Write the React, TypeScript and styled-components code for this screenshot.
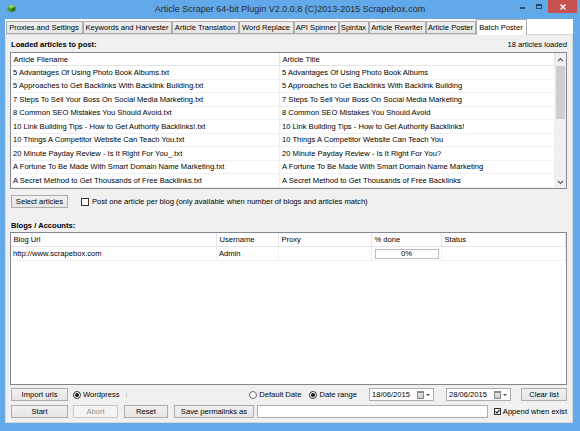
import React from 'react';
import styled, { createGlobalStyle } from 'styled-components';

const GlobalStyle = createGlobalStyle`
  * { box-sizing: border-box; }
  html, body { margin: 0; padding: 0; background: #62a9e9; }
  body {
    font-family: 'Liberation Sans', Arial, sans-serif;
    font-size: 7.6px;
    color: #000;
  }
`;

const Window = styled.div`
  width: 580px;
  height: 431px;
  background: #62a9e9;
  display: flex;
  flex-direction: column;
  overflow: hidden;
`;

const TitleBar = styled.div`
  height: 19px;
  flex: none;
  display: grid;
  grid-template-columns: 1fr auto 1fr;
  align-items: start;
`;

const AppIcon = styled.svg`
  display: block;
  margin: 4px 0 0 7px;
`;

const Title = styled.div`
  font-size: 9px;
  line-height: 19px;
  color: #2b2b2b;
  white-space: nowrap;
`;

const Controls = styled.div`
  justify-self: end;
  display: flex;
  margin-right: 3px;
`;

const CtlBtn = styled.div<{ $w: number }>`
  width: ${p => p.$w}px;
  height: 13px;
  display: flex;
  align-items: center;
  justify-content: center;
`;

const MinGlyph = styled.span`
  width: 5px;
  height: 2px;
  background: #2c4a68;
  margin-top: 2px;
`;

const MaxGlyph = styled.span`
  width: 6px;
  height: 5px;
  border: 1px solid #2c4a68;
  border-top-width: 2px;
  margin-top: -1px;
`;

const CloseBtn = styled.div`
  width: 29px;
  height: 13px;
  margin-left: 3px;
  background: #c75050;
  display: flex;
  align-items: center;
  justify-content: center;
`;

const Client = styled.div`
  flex: 1;
  margin: 0 7px 8px 5px;
  display: flex;
  flex-direction: column;
  background: #fff;
  min-height: 0;
`;

const TabStrip = styled.div`
  height: 15px;
  flex: none;
  display: flex;
  align-items: flex-end;
  padding-left: 0.5px;
  background: #fff;
  position: relative;
  z-index: 1;
`;

const Tab = styled.div<{ $active?: boolean; $w: number }>`
  width: ${p => p.$w}px;
  flex: none;
  height: ${p => (p.$active ? 16 : 13)}px;
  margin-bottom: ${p => (p.$active ? -1 : 0)}px;
  border: 1px solid #acacac;
  border-bottom: ${p => (p.$active ? 'none' : '1px solid #acacac')};
  background: ${p => (p.$active ? '#ffffff' : 'linear-gradient(#f0f0f0, #e5e5e5)')};
  display: flex;
  align-items: center;
  justify-content: center;
  white-space: nowrap;
`;

const TabPage = styled.div`
  flex: 1;
  min-height: 0;
  background: #f0f0f0;
  border: 1px solid #d9d9d9;
  padding: 3px 5px 4px 4px;
  display: flex;
  flex-direction: column;
`;

const SectionRow = styled.div<{ $mt?: number }>`
  height: 12px;
  flex: none;
  margin-top: ${p => p.$mt ?? 0}px;
  display: flex;
  align-items: center;
  justify-content: space-between;
  padding-left: 1px;
`;

const Bold = styled.span`
  font-weight: bold;
`;

const ListBox = styled.div<{ $h?: number; $mt: number }>`
  ${p => (p.$h ? `height: ${p.$h}px; flex: none;` : 'flex: 1; min-height: 0;')}
  margin-top: ${p => p.$mt}px;
  border: 1px solid #828790;
  background: #fff;
  display: flex;
  overflow: hidden;
`;

const ListMain = styled.div`
  flex: 1;
  min-width: 0;
  display: flex;
  flex-direction: column;
`;

const HeaderRow = styled.div<{ $h: number }>`
  height: ${p => p.$h}px;
  flex: none;
  display: flex;
  border-bottom: 1px solid #e5e5e5;
`;

const HeaderCell = styled.div<{ $w?: number }>`
  ${p => (p.$w ? `width: ${p.$w}px; flex: none;` : 'flex: 1;')}
  border-right: 1px solid #e5e5e5;
  padding-left: 2.5px;
  display: flex;
  align-items: center;
  white-space: nowrap;
  overflow: hidden;
`;

const Row = styled.div<{ $h: number }>`
  height: ${p => p.$h}px;
  flex: none;
  display: flex;
  border-bottom: 1px solid #f0f0f0;
`;

const Cell = styled.div<{ $w?: number; $center?: boolean }>`
  ${p => (p.$w ? `width: ${p.$w}px; flex: none;` : 'flex: 1;')}
  border-right: 1px solid #f0f0f0;
  padding-left: ${p => (p.$center ? 0 : 2)}px;
  display: flex;
  align-items: center;
  justify-content: ${p => (p.$center ? 'center' : 'flex-start')};
  white-space: nowrap;
  overflow: hidden;
`;

const ScrollBar = styled.div`
  width: 11px;
  flex: none;
  background: #f0f0f0;
  display: flex;
  flex-direction: column;
`;

const ScrollArrow = styled.div<{ $h: number }>`
  height: ${p => p.$h}px;
  flex: none;
  display: flex;
  align-items: center;
  justify-content: center;
  background: #f0f0f0;
`;

const ScrollTrack = styled.div`
  flex: 1;
  display: flex;
  flex-direction: column;
  padding: 0 1px;
`;

const ScrollThumb = styled.div`
  height: 53px;
  background: #cdcdcd;
`;

const ToolRow = styled.div<{ $mt: number }>`
  height: 13px;
  flex: none;
  margin-top: ${p => p.$mt}px;
  display: flex;
  align-items: center;
  padding-left: 1px;
`;

const Button = styled.button<{ $w: number; $ml?: number }>`
  width: ${p => p.$w}px;
  height: 13px;
  flex: none;
  margin: 0 0 0 ${p => p.$ml ?? 0}px;
  padding: 0;
  font-family: inherit;
  font-size: 7.6px;
  line-height: 11px;
  color: ${p => (p.disabled ? '#8f8f8f' : '#000')};
  border: 1px solid ${p => (p.disabled ? '#c8c8c8' : '#acacac')};
  background: ${p => (p.disabled ? '#f4f4f4' : 'linear-gradient(#f0f0f0, #e5e5e5)')};
  border-radius: 0;
`;

const Option = styled.label<{ $ml?: number }>`
  display: flex;
  align-items: center;
  gap: 2px;
  margin-left: ${p => p.$ml ?? 0}px;
  white-space: nowrap;
  flex: none;
`;

const CheckBox = styled.span<{ $size: number }>`
  width: ${p => p.$size}px;
  height: ${p => p.$size}px;
  border: 1px solid #333;
  background: #fff;
  flex: none;
  display: flex;
  align-items: center;
  justify-content: center;
`;

const Radio = styled.span<{ $on?: boolean }>`
  width: 8px;
  height: 8px;
  border-radius: 50%;
  border: 1px solid ${p => (p.$on ? '#333' : '#6a6a6a')};
  background: #fff;
  flex: none;
  display: flex;
  align-items: center;
  justify-content: center;
  &::after {
    content: '';
    width: 4px;
    height: 4px;
    border-radius: 50%;
    background: #1a1a1a;
    display: ${p => (p.$on ? 'block' : 'none')};
  }
`;

const Tick = styled.span`
  width: 1px;
  height: 4px;
  background: #cfcfcf;
  margin-left: 6px;
`;

const Spacer = styled.div`
  flex: 1;
`;

const DateBox = styled.div<{ $ml: number }>`
  width: ${p => (p.$ml > 11 ? 65 : 64)}px;
  height: 13px;
  flex: none;
  margin-left: ${p => p.$ml}px;
  border: 1px solid #abadb3;
  background: #fff;
  display: flex;
  align-items: center;
  padding-left: 2px;
`;

const DateText = styled.span`
  flex: 1;
`;

const CalIcon = styled.span`
  width: 7px;
  height: 8px;
  border: 1px solid #8a8a8a;
  border-top-width: 2px;
  background: linear-gradient(#e8e8e8, #c8c8c8);
  flex: none;
`;

const DropArrow = styled.span`
  width: 0;
  height: 0;
  border-left: 2px solid transparent;
  border-right: 2px solid transparent;
  border-top: 2px solid #444;
  margin: 0 3px 0 2px;
  flex: none;
`;

const TextBox = styled.div`
  flex: 1;
  height: 13px;
  margin-left: 3px;
  border: 1px solid #abadb3;
  background: #fff;
`;

const Progress = styled.div`
  width: 64px;
  height: 10px;
  border: 1px solid #bcbcbc;
  background: #fff;
  display: flex;
  align-items: center;
  justify-content: center;
  font-size: 7.6px;
`;

const articles: [string, string][] = [
  ['5 Advantages Of Using Photo Book Albums.txt', '5 Advantages Of Using Photo Book Albums'],
  ['5 Approaches to Get Backlinks With Backlink Building.txt', '5 Approaches to Get Backlinks With Backlink Building'],
  ['7 Steps To Sell Your Boss On Social Media Marketing.txt', '7 Steps To Sell Your Boss On Social Media Marketing'],
  ['8 Common SEO Mistakes You Should Avoid.txt', '8 Common SEO Mistakes You Should Avoid'],
  ['10 Link Building Tips - How to Get Authority Backlinks!.txt', '10 Link Building Tips - How to Get Authority Backlinks!'],
  ['10 Things A Competitor Website Can Teach You.txt', '10 Things A Competitor Website Can Teach You'],
  ['20 Minute Payday Review - Is It Right For You_.txt', '20 Minute Payday Review - Is It Right For You?'],
  ['A Fortune To Be Made With Smart Domain Name Marketing.txt', 'A Fortune To Be Made With Smart Domain Name Marketing'],
  ['A Secret Method to Get Thousands of Free Backlinks.txt', 'A Secret Method to Get Thousands of Free Backlinks'],
];

const tabs: [string, number][] = [
  ['Proxies and Settings', 77],
  ['Keywords and Harvester', 89],
  ['Article Translation', 67],
  ['Word Replace', 55],
  ['API Spinner', 45],
  ['Spintax', 30],
  ['Article Rewriter', 57],
  ['Article Poster', 50],
  ['Batch Poster', 51],
];

const Chevron = ({ up }: { up?: boolean }) => (
  <svg width="7" height="5" viewBox="0 0 7 5">
    <path
      d={up ? 'M1 4 L3.5 1.5 L6 4' : 'M1 1 L3.5 3.5 L6 1'}
      fill="none"
      stroke="#606060"
      strokeWidth="1.2"
    />
  </svg>
);

export default function App() {
  return (
    <>
      <GlobalStyle />
      <Window>
        <TitleBar>
          <AppIcon width="9" height="9" viewBox="0 0 9 9">
            <path d="M4.5 0.5 L8.5 2.5 L4.5 4.5 L0.5 2.5 Z" fill="#8fcf5a" />
            <path d="M0.5 2.5 L4.5 4.5 L4.5 8.5 L0.5 6.5 Z" fill="#4f9a2c" />
            <path d="M8.5 2.5 L4.5 4.5 L4.5 8.5 L8.5 6.5 Z" fill="#2f6d1c" />
          </AppIcon>
          <Title>Article Scraper 64-bit Plugin V2.0.0.8 (C)2013-2015 Scrapebox.com</Title>
          <Controls>
            <CtlBtn $w={22}>
              <MinGlyph />
            </CtlBtn>
            <CtlBtn $w={12}>
              <MaxGlyph />
            </CtlBtn>
            <CloseBtn>
              <svg width="6" height="6" viewBox="0 0 6 6">
                <path d="M0.5 0.5 L5.5 5.5 M5.5 0.5 L0.5 5.5" stroke="#fff" strokeWidth="1.4" />
              </svg>
            </CloseBtn>
          </Controls>
        </TitleBar>

        <Client>
          <TabStrip>
            {tabs.map(([t, w]) => (
              <Tab key={t} $w={w} $active={t === 'Batch Poster'}>
                {t}
              </Tab>
            ))}
          </TabStrip>

          <TabPage>
            <SectionRow>
              <Bold>Loaded articles to post:</Bold>
              <span>18 articles loaded</span>
            </SectionRow>

            <ListBox $h={137} $mt={2}>
              <ListMain>
                <HeaderRow $h={13}>
                  <HeaderCell $w={269}>Article Filename</HeaderCell>
                  <HeaderCell>Article Title</HeaderCell>
                </HeaderRow>
                {articles.map(([f, t]) => (
                  <Row key={f} $h={13.5}>
                    <Cell $w={269}>{f}</Cell>
                    <Cell>{t}</Cell>
                  </Row>
                ))}
              </ListMain>
              <ScrollBar>
                <ScrollArrow $h={13}>
                  <Chevron up />
                </ScrollArrow>
                <ScrollTrack>
                  <ScrollThumb />
                </ScrollTrack>
                <ScrollArrow $h={12}>
                  <Chevron />
                </ScrollArrow>
              </ScrollBar>
            </ListBox>

            <ToolRow $mt={6}>
              <Button $w={57}>Select articles</Button>
              <Option $ml={13}>
                <CheckBox $size={8} />
                <span style={{ marginLeft: 1 }}>
                  Post one article per blog (only available when number of blogs and articles match)
                </span>
              </Option>
            </ToolRow>

            <SectionRow $mt={11}>
              <Bold>Blogs / Accounts:</Bold>
            </SectionRow>

            <ListBox $mt={1}>
              <ListMain>
                <HeaderRow $h={14}>
                  <HeaderCell $w={206}>Blog Url</HeaderCell>
                  <HeaderCell $w={62}>Username</HeaderCell>
                  <HeaderCell $w={93}>Proxy</HeaderCell>
                  <HeaderCell $w={70}>% done</HeaderCell>
                  <HeaderCell>Status</HeaderCell>
                </HeaderRow>
                <Row $h={14}>
                  <Cell $w={206}>http://www.scrapebox.com</Cell>
                  <Cell $w={62}>Admin</Cell>
                  <Cell $w={93} />
                  <Cell $w={70} $center>
                    <Progress>0%</Progress>
                  </Cell>
                  <Cell />
                </Row>
              </ListMain>
            </ListBox>

            <ToolRow $mt={3}>
              <Button $w={57}>Import urls</Button>
              <Option $ml={5}>
                <Radio $on />
                <span>Wordpress</span>
              </Option>
              <Tick />
              <Spacer />
              <Option>
                <Radio />
                <span>Default Date</span>
              </Option>
              <Option $ml={8}>
                <Radio $on />
                <span>Date range</span>
              </Option>
              <DateBox $ml={12}>
                <DateText>18/06/2015</DateText>
                <CalIcon />
                <DropArrow />
              </DateBox>
              <DateBox $ml={12}>
                <DateText>28/06/2015</DateText>
                <CalIcon />
                <DropArrow />
              </DateBox>
              <Button $w={46} $ml={10}>
                Clear list
              </Button>
            </ToolRow>

            <ToolRow $mt={4}>
              <Button $w={57}>Start</Button>
              <Button $w={45} $ml={5} disabled>
                Abort
              </Button>
              <Button $w={44} $ml={6}>
                Reset
              </Button>
              <Button $w={80} $ml={6}>
                Save permalinks as
              </Button>
              <TextBox />
              <Option $ml={6}>
                <CheckBox $size={7}>
                  <svg width="5" height="5" viewBox="0 0 5 5">
                    <path d="M0.5 2.5 L2 4 L4.5 0.8" fill="none" stroke="#111" strokeWidth="1.1" />
                  </svg>
                </CheckBox>
                <span>Append when exist</span>
              </Option>
            </ToolRow>
          </TabPage>
        </Client>
      </Window>
    </>
  );
}
